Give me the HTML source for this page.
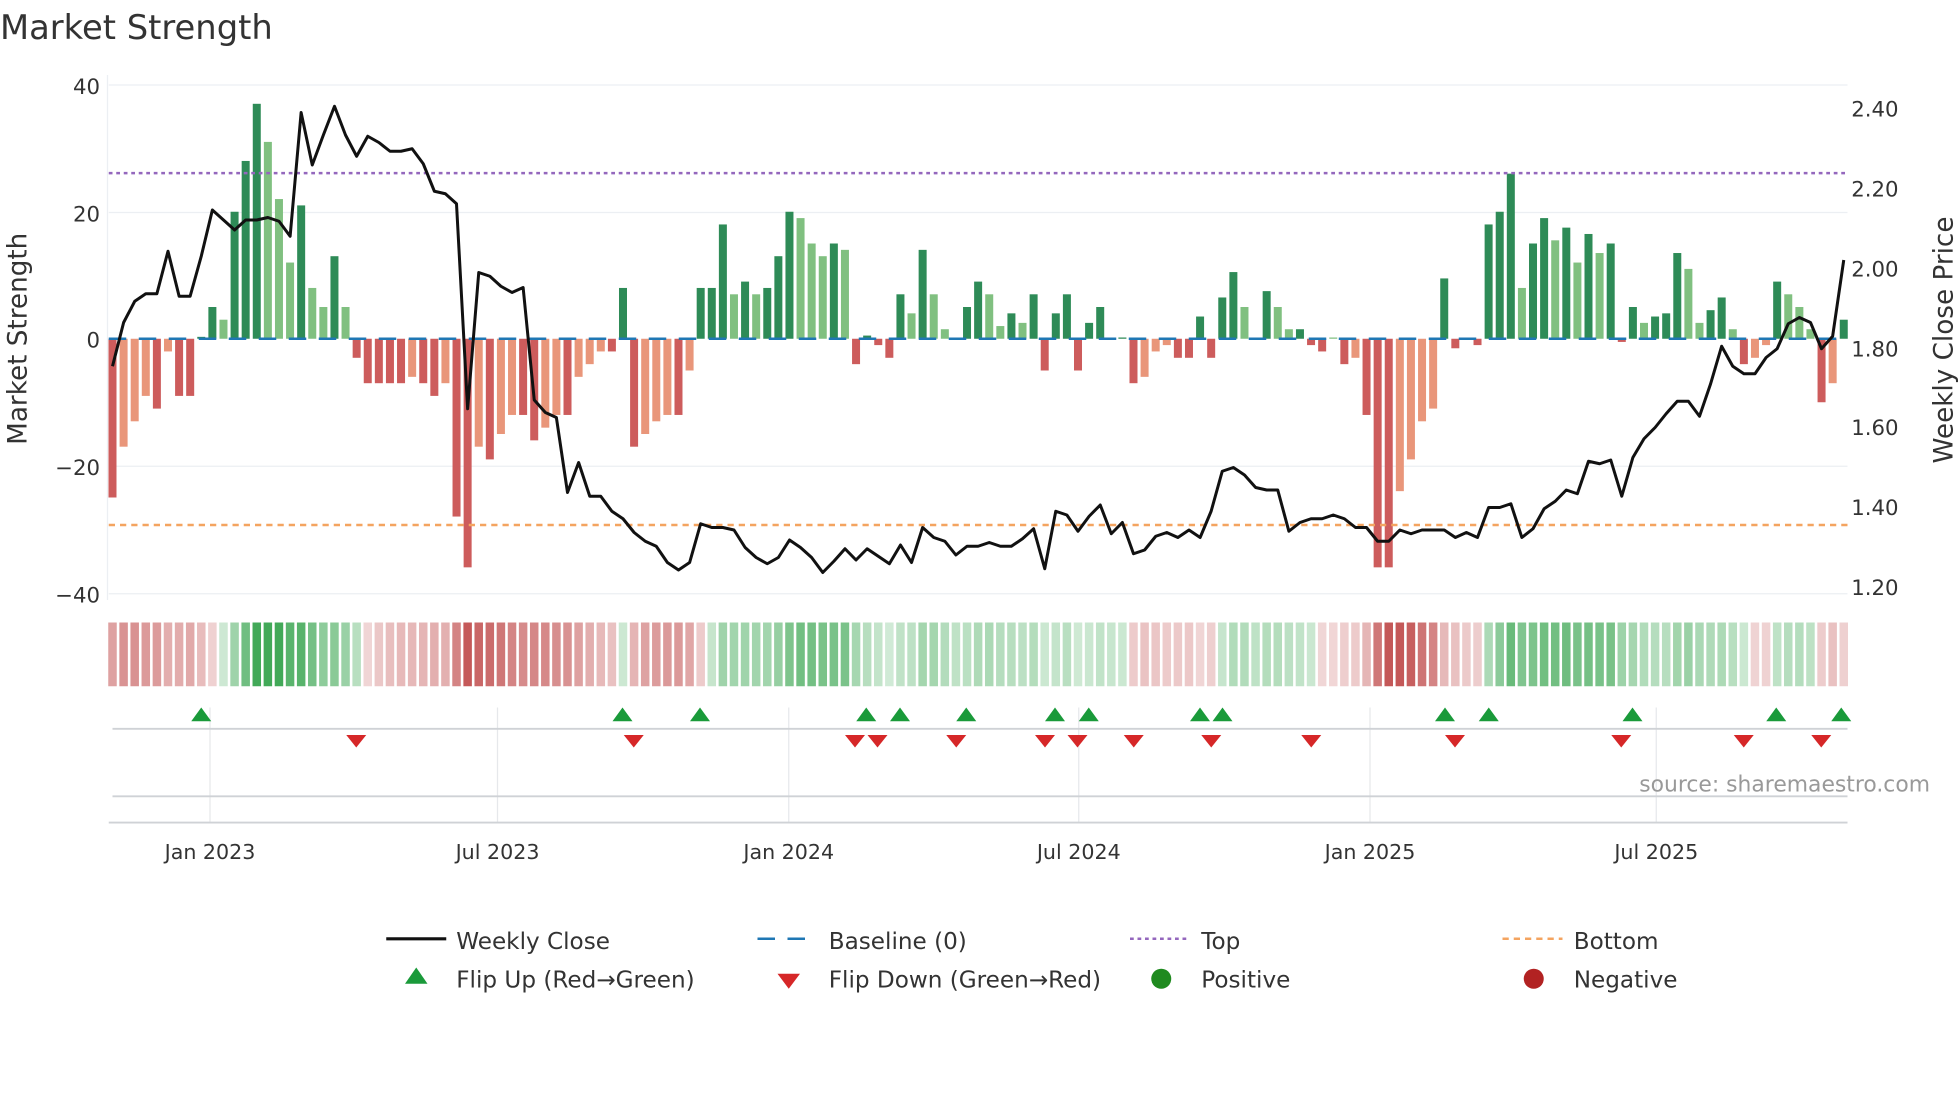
<!DOCTYPE html>
<html><head><meta charset="utf-8"><style>
html,body{margin:0;padding:0;background:#fff;}
svg{display:block;}
text{font-family:"DejaVu Sans","Liberation Sans",sans-serif;}
</style></head><body>
<svg id="s" width="1960" height="1102" viewBox="0 0 1568 881.6" xmlns="http://www.w3.org/2000/svg">
<rect width="1568" height="882" fill="#fff"/>
<text x="0" y="31" font-size="27" fill="#333">Market Strength</text>
<g stroke="#eceff3" stroke-width="1">
<line x1="87" x2="1478" y1="68" y2="68"/><line x1="87" x2="1478" y1="170" y2="170"/>
<line x1="87" x2="1478" y1="373" y2="373"/><line x1="87" x2="1478" y1="475" y2="475"/>
<line x1="86" x2="86" y1="60" y2="480"/>
</g>
<g font-size="17" fill="#333" text-anchor="end">
<text x="80" y="75">40</text><text x="80" y="177">20</text><text x="80" y="278">0</text>
<text x="80" y="380">−20</text><text x="80" y="482">−40</text>
</g>
<g font-size="17" fill="#333">
<text x="1481" y="93">2.40</text><text x="1481" y="157">2.20</text><text x="1481" y="221">2.00</text>
<text x="1481" y="285">1.80</text><text x="1481" y="348">1.60</text><text x="1481" y="412">1.40</text><text x="1481" y="476">1.20</text>
</g>
<text transform="translate(21,271) rotate(-90)" font-size="21" fill="#333" text-anchor="middle">Market Strength</text>
<text transform="translate(1562,272) rotate(-90)" font-size="21" fill="#333" text-anchor="middle">Weekly Close Price</text>
<g id="bars"></g>
<line x1="87" x2="1478" y1="271" y2="271" stroke="#1f77b4" stroke-width="2" stroke-dasharray="14,10"/>
<line x1="87" x2="1478" y1="138.5" y2="138.5" stroke="#9467bd" stroke-width="2" stroke-dasharray="3,3"/>
<line x1="87" x2="1478" y1="420" y2="420" stroke="#f4a460" stroke-width="2" stroke-dasharray="5,4"/>
<polyline id="price" fill="none" stroke="#111" stroke-width="2.4" stroke-linejoin="round"/>
<g id="heat"></g>
<g stroke="#e6e8eb" stroke-width="1">
<line x1="168" x2="168" y1="566" y2="658"/><line x1="398" x2="398" y1="566" y2="658"/>
<line x1="631" x2="631" y1="566" y2="658"/><line x1="863" x2="863" y1="566" y2="658"/>
<line x1="1096" x2="1096" y1="566" y2="658"/><line x1="1325" x2="1325" y1="566" y2="658"/>
</g>
<line x1="90" x2="1478" y1="583" y2="583" stroke="#cfd2d6" stroke-width="1.5"/>
<line x1="90" x2="1478" y1="637" y2="637" stroke="#cfd2d6" stroke-width="1.5"/>
<line x1="87" x2="1478" y1="658" y2="658" stroke="#cfd2d6" stroke-width="1.5"/>
<g id="marks"></g>
<text x="1544" y="633" font-size="17.5" fill="#999" text-anchor="end">source: sharemaestro.com</text>
<g font-size="16.5" fill="#333" text-anchor="middle">
<text x="168" y="687">Jan 2023</text><text x="398" y="687">Jul 2023</text><text x="631" y="687">Jan 2024</text>
<text x="863" y="687">Jul 2024</text><text x="1096" y="687">Jan 2025</text><text x="1325" y="687">Jul 2025</text>
</g>
<g font-size="18.5" fill="#333">
<line x1="309" x2="357" y1="751" y2="751" stroke="#111" stroke-width="2.5"/><text x="365" y="759">Weekly Close</text>
<line x1="606" x2="654" y1="751" y2="751" stroke="#1f77b4" stroke-width="2" stroke-dasharray="14,10"/><text x="663" y="759">Baseline (0)</text>
<line x1="904" x2="952" y1="751" y2="751" stroke="#9467bd" stroke-width="2" stroke-dasharray="3,3"/><text x="961" y="759">Top</text>
<line x1="1202" x2="1250" y1="751" y2="751" stroke="#f4a460" stroke-width="2" stroke-dasharray="5,4"/><text x="1259" y="759">Bottom</text>
<polygon points="333,774 324,787 342,787" fill="#1a9a3a"/><text x="365" y="790">Flip Up (Red→Green)</text>
<polygon points="622,779 640,779 631,791" fill="#d62728"/><text x="663" y="790">Flip Down (Green→Red)</text>
<circle cx="929" cy="783" r="8" fill="#1f8a1f"/><text x="961" y="790">Positive</text>
<circle cx="1227" cy="783" r="8" fill="#b22222"/><text x="1259" y="790">Negative</text>
</g>
</svg>
<script>
var V=[-25,-17,-13,-9,-11,-2,-9,-9,0.3,5,3,20,28,37,31,22,12,21,8,5,13,5,
-3,-7,-7,-7,-7,-6,-7,-9,-7,-28,-36,-17,-19,-15,-12,-12,-16,-14,-12,-12,-6,-4,-2,-2,
8,-17,-15,-13,-12,-12,-5,
8,8,18,7,9,7,8,13,20,19,15,13,15,14,
-4,0.5,-1,-3,7,4,14,7,1.5,0,5,9,7,2,4,2.5,7,-5,4,7,-5,2.5,5,0,0,-7,-6,-2,-1,-3,-3,3.5,-3,6.5,10.5,5,0,7.5,5,1.5,1.5,-1,-2,0,-4,-3,-12,-36,-36,-24,-19,-13,-11,9.5,-1.5,0,-1,18,20,26,8,15,19,15.5,17.5,12,16.5,13.5,15,-0.5,5,2.5,3.5,4,13.5,11,2.5,4.5,6.5,1.5,-4,-3,-1,9,7,5,1.5,-10,-7,3];
var P=[293,258,241,235,235,201,237,237,205,168,176,184,176,176,174,177,189,90,132,108,85,108,125,109,114,121,121,119,131,153,155,163,327,218,221,229,234,230,320,330,334,394,370,397,397,409,415,426,433,437,450,456,450,419,422,422,424,438,446,451,446,432,438,446,458,449,439,448,439,445,451,436,450,422,430,433,444,437,437,434,437,437,431,423,455,409,412,425,413,404,427,418,443,440,429,426,430,424,430,409,377,374,380,390,392,392,425,418,415,415,412,415,422,422,433,433,424,427,424,424,424,430,426,430,406,406,403,430,423,407,401,392,395,369,371,368,397,366,351,342,331,321,321,333,307,277,293,299,299,286,279,259,254,258,279,269,208];
var NS="http://www.w3.org/2000/svg",dx=(1475-90)/(V.length-1);
function el(t,a,p){var e=document.createElementNS(NS,t);for(var k in a)e.setAttribute(k,a[k]);document.getElementById(p).appendChild(e);}
var sc=5.08,cum=0;
for(var i=0;i<V.length;i++){var v=V[i],x=90+i*dx,prev=i?V[i-1]:0;
 var strong=Math.abs(v)>=Math.abs(prev)||(v*prev<0);
 var c=v>=0?(strong?"#2e8b57":"#80c080"):(strong?"#cd5c5c":"#e9967a");
 var h=Math.abs(v)*sc;if(h<1)h=1;
 el("rect",{x:x-3.2,y:v>=0?271-h:271,width:6.4,height:h,fill:c},"bars");
 cum=cum*0.6+v*0.4;var a=Math.min(0.9,0.22+Math.abs(cum)/35);
 var hc=cum>=0?"rgba(46,160,70,"+a+")":"rgba(190,70,70,"+a+")";
 el("rect",{x:x-3.4,y:498,width:6.8,height:51,fill:hc},"heat");
}
var pts=P.map(function(y,i){return (90+i*dx).toFixed(1)+","+y;}).join(" ");
document.getElementById("price").setAttribute("points",pts);
[161,498,560,693,720,773,844,871,960,978,1156,1191,1306,1421,1473].forEach(function(x){el("polygon",{points:(x)+",566 "+(x-8)+",577 "+(x+8)+",577",fill:"#1a9a3a"},"marks");});
[285,507,684,702,765,836,862,907,969,1049,1164,1297,1395,1457].forEach(function(x){el("polygon",{points:(x-8)+",588 "+(x+8)+",588 "+x+",598",fill:"#d62728"},"marks");});
</script>
</body></html>
